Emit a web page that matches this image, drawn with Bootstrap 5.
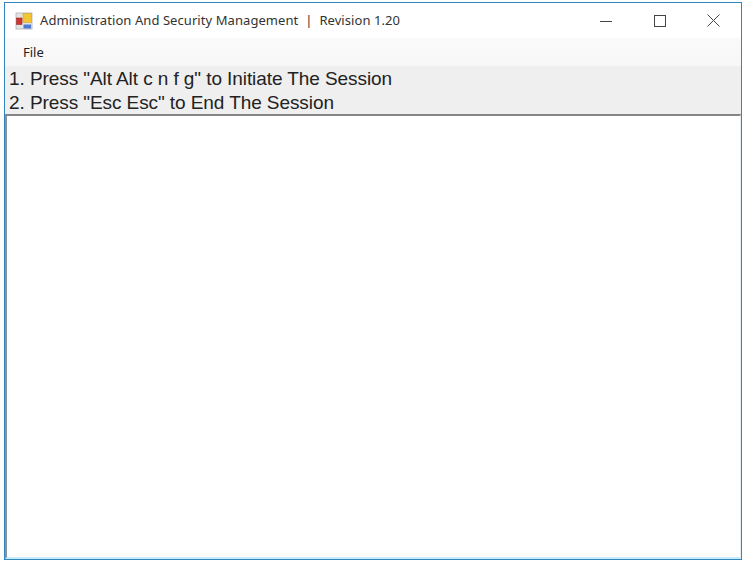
<!DOCTYPE html>
<html lang="en">
<head>
<meta charset="utf-8">
<title>Administration And Security Management</title>
<link href="https://cdn.jsdelivr.net/npm/bootstrap@5.3.0/dist/css/bootstrap.min.css" rel="stylesheet">
<style>
html, body { height: 100%; background: #fff; overflow: hidden; }
.app-window { margin: 2px 3px 2px 4px; height: 558px; border: 1.5px solid #2f86c1; background: #fff; }
.app-title { height: 35px; padding-left: 10px; font: 13px "Noto Sans", "Open Sans", sans-serif; color: #333; letter-spacing: .07px; }
.app-title-text { padding-bottom: 2px; }
.app-logo { width: 18px; height: 18px; margin-right: 7px; flex: none; }
.win-ctrl { width: 54px; height: 35px; }
.win-close { padding-right: 2px; }
.app-menu { height: 28px; background: linear-gradient(#fafafa, #f7f7f7); padding-left: 18px; font: 13px "Noto Sans", "Open Sans", sans-serif; color: #222; }
.app-info { background: #efefef; padding: 1px 0 0 4px; font: 19px/24px "Liberation Sans", Arial, sans-serif; color: #222; height: 48px; letter-spacing: -.08px; }
.app-body { border-top: 2px solid #858585; border-left: 2px solid #8a9299; border-right: 1px solid #e4eef4; border-bottom: 2px solid #c9ecfb; }
</style>
</head>
<body>
<div class="app-window d-flex flex-column">
  <div class="app-title d-flex align-items-center">
    <svg class="app-logo" viewBox="0 0 18 18">
      <rect x="1" y="1" width="16" height="16" fill="#e4e4e4" stroke="#b0b0b0" stroke-width=".8"/>
      <rect x="8" y="1.5" width="8.5" height="9" fill="#f2c531" stroke="#c9a23a" stroke-width=".6"/>
      <rect x="1.5" y="6" width="5.5" height="6.5" fill="#d2332a" stroke="#9c2a24" stroke-width=".6"/>
      <rect x="8.5" y="12.5" width="7.5" height="4" fill="#4a7bd0"/>
    </svg>
    <span class="app-title-text flex-grow-1">Administration And Security Management&nbsp; |&nbsp; Revision 1.20</span>
    <div class="d-flex">
      <div class="win-ctrl d-flex align-items-center justify-content-center">
        <svg width="12" height="12" viewBox="0 0 12 12"><path d="M0 6.5H12" stroke="#444" stroke-width="1"/></svg>
      </div>
      <div class="win-ctrl d-flex align-items-center justify-content-center">
        <svg width="12" height="12" viewBox="0 0 12 12"><rect x=".5" y=".5" width="11" height="11" fill="none" stroke="#444" stroke-width="1"/></svg>
      </div>
      <div class="win-ctrl win-close d-flex align-items-center justify-content-center">
        <svg width="13" height="13" viewBox="0 0 13 13"><path d="M.5 .5L12.5 12.5M12.5 .5L.5 12.5" stroke="#444" stroke-width="1"/></svg>
      </div>
    </div>
  </div>
  <div class="app-menu d-flex align-items-center">File</div>
  <div class="app-info">
    <div>1. Press "Alt Alt c n f g" to Initiate The Session</div>
    <div>2. Press "Esc Esc" to End The Session</div>
  </div>
  <div class="app-body flex-grow-1"></div>
</div>
<script src="https://cdn.jsdelivr.net/npm/bootstrap@5.3.0/dist/js/bootstrap.bundle.min.js"></script>
</body>
</html>
